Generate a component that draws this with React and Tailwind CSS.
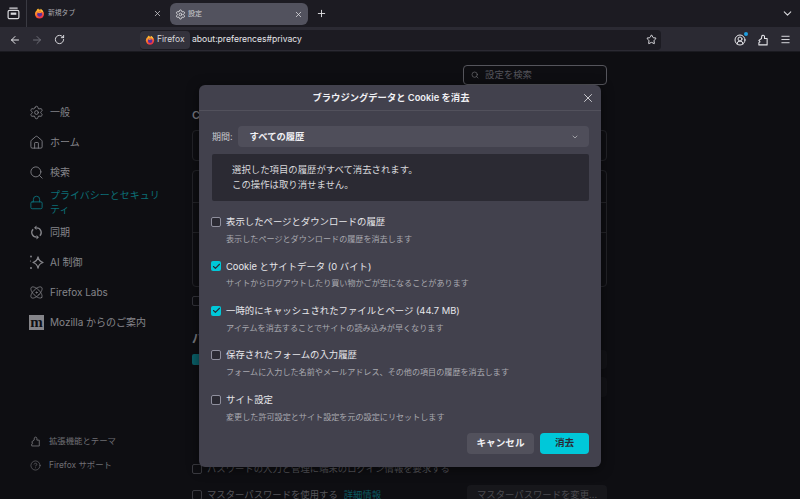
import React from "react";
import { X, Plus, ArrowLeft, ArrowRight, RotateCw, Star, Menu, ChevronDown, Settings, House, Search, Lock, Atom, CircleHelp, CircleUserRound, Check } from "lucide-react";

const FONT = "font-['Inter','Liberation_Sans','Noto_Sans_CJK_JP',sans-serif]";

function Fox({ size = 14 }) {
  return (
    <svg width={size} height={size} viewBox="0 0 16 16" className="shrink-0">
      <defs>
        <linearGradient id="foxg" x1="0.2" y1="0" x2="0.7" y2="1">
          <stop offset="0" stopColor="#ffc02e" />
          <stop offset="0.5" stopColor="#ff6a2b" />
          <stop offset="1" stopColor="#e3274f" />
        </linearGradient>
      </defs>
      <circle cx="8" cy="8.8" r="6.6" fill="url(#foxg)" />
      <path d="M4 3 C4.5 1.6 5.6 .8 6.6 .6 C6.3 1.8 7 2.6 8.4 3 L6 5 Z" fill="#ffb52e" />
      <path d="M9.2 1 C11.5 2 13 3.8 13.4 6 L10.5 5.2 Z" fill="#ffc93c" />
      <circle cx="8.2" cy="9" r="3.6" fill="#5b2a9d" />
      <path d="M5 6.5 C7 5 10 5.4 11.4 7.4 C10 7 8.6 7 7.6 7.8 Z" fill="#ff9a2b" />
    </svg>
  );
}

function Tray() {
  return (
    <svg width="13" height="13" viewBox="0 0 14 14" fill="none" stroke="#d8d8dc" strokeWidth="1.3">
      <rect x="1.2" y="3.6" width="11.6" height="9" rx="1.6" />
      <path d="M3 1.2 H11" strokeLinecap="round" />
      <rect x="4" y="6" width="6" height="2.4" fill="#d8d8dc" stroke="none" />
    </svg>
  );
}

function Ext({ size = 12, strokeWidth = 1.4 }) {
  return (
    <svg width={size} height={size} viewBox="0 0 16 16" fill="none" stroke="currentColor" strokeWidth={strokeWidth} strokeLinejoin="round">
      <path d="M2.5 14.5 H13.5 V6 H10 V3.2 A1.9 1.9 0 0 0 6.3 3 L6 6 L2.5 8.5 L4 10.5 L2.5 11.5 Z" />
    </svg>
  );
}

function Sync() {
  return (
    <svg width="15" height="15" viewBox="0 0 16 16" fill="none" stroke="currentColor" strokeWidth="1.4">
      <path d="M8 3 A5 5 0 0 1 11.6 11.5" />
      <path d="M8 13 A5 5 0 0 1 4.4 4.5" />
      <path d="M8 .6 V5.4 L5.4 3 Z" fill="currentColor" stroke="none" />
      <path d="M8 10.6 V15.4 L10.6 13 Z" fill="currentColor" stroke="none" />
    </svg>
  );
}

function Spark() {
  return (
    <svg width="15" height="15" viewBox="0 0 15 15" fill="none" stroke="currentColor" strokeWidth="1.3" strokeLinejoin="round">
      <path d="M9 2 C9.6 5 10.6 6.4 14 7.5 C10.6 8.6 9.6 10 9 13 C8.4 10 7.4 8.6 4 7.5 C7.4 6.4 8.4 5 9 2 Z" />
      <circle cx="2" cy="1.5" r="0.9" fill="currentColor" stroke="none" />
      <circle cx="2" cy="13" r="1" fill="currentColor" stroke="none" />
      <circle cx="1.5" cy="6" r="0.6" fill="currentColor" stroke="none" />
    </svg>
  );
}

function NavItem({ icon, children }) {
  return (
    <div className="flex h-[30px] items-center gap-[6px] text-[#85858a]">
      <span className="flex w-[15px] justify-center">{icon}</span>
      <span className="text-[10px]">{children}</span>
    </div>
  );
}

function Option({ checked, title, desc }) {
  return (
    <div className="flex flex-col">
      <div className="flex h-[16px] items-center gap-[5px]">
        {checked ? (
          <span className="flex h-[10px] w-[10px] items-center justify-center rounded-[2px] bg-[#00c8d9]">
            <Check size={9} strokeWidth={3} className="text-[#2b2a33]" />
          </span>
        ) : (
          <span className="h-[10px] w-[10px] rounded-[2px] border border-[#8f8f9d] bg-[#2b2a33]" />
        )}
        <span className="text-[9.4px] leading-none text-[#e6e6ea]">{title}</span>
      </div>
      <div className="mt-[1px] h-[16px] pl-[15px] text-[8.1px] leading-[16px] text-[#a9a9b0]">{desc}</div>
    </div>
  );
}

export default function App() {
  return (
    <div className={`${FONT} relative flex h-[499px] w-[800px] flex-col overflow-hidden bg-[#0e0e12]`}>
      {/* tab bar */}
      <div className="flex h-[27px] items-center bg-[#1c1b22]">
        <div className="flex h-[27px] w-[27px] items-center justify-center border-r border-[#3a3a42]">
          <Tray />
        </div>
        <div className="flex h-[22px] w-[135px] items-center pl-[7px] pr-[0px]">
          <Fox size={11} />
          <span className="ml-[3px] text-[6.8px] text-[#a9a9b0]">新規タブ</span>
          <X size={9} strokeWidth={2} className="ml-auto text-[#d0d0d4]" />
        </div>
        <div className="ml-[8px] mt-[1px] flex h-[22px] w-[138px] items-center rounded-[6px] bg-[#52525e] pl-[5px] pr-[5px]">
          <Settings size={11} className="text-[#d8d8dc]" />
          <span className="ml-[2px] text-[7px] text-[#d0d0d4]">設定</span>
          <X size={9} strokeWidth={2} className="ml-auto text-[#e0e0e4]" />
        </div>
        <Plus size={11} strokeWidth={2} className="ml-[8px] text-[#e0e0e4]" />
        <ChevronDown size={13} className="ml-auto mr-[6px] text-[#d8d8dc]" />
      </div>
      {/* toolbar */}
      <div className="flex h-[25px] items-center border-b border-[#1a1a20] bg-[#2b2a33] pt-[1px]">
        <ArrowLeft size={12} strokeWidth={2} className="ml-[9px] text-[#e6e6ea]" />
        <ArrowRight size={12} strokeWidth={2} className="ml-[10px] text-[#6f6f78]" />
        <RotateCw size={11} strokeWidth={2} className="ml-[11px] text-[#e6e6ea]" />
        <div className="ml-[75px] flex h-[20px] w-[521px] items-center rounded-[4px] bg-[#1c1b22]">
          <div className="flex h-[18px] w-[50px] items-center gap-[2px] rounded-[4px] bg-[#33323c] pl-[5px]">
            <Fox size={10} />
            <span className="text-[8.5px] text-[#d8d8dc]">Firefox</span>
          </div>
          <span className="ml-[2px] text-[8.6px] text-[#e6e6ea]">about:preferences#privacy</span>
          <Star size={11} strokeWidth={2} className="ml-auto mr-[4px] text-[#e6e6ea]" />
        </div>
        <div className="relative ml-[73px]">
          <CircleUserRound size={12} strokeWidth={2} className="text-[#e6e6ea]" />
          <span className="absolute right-[-2px] top-[-2px] h-[4px] w-[4px] rounded-full bg-[#1f9fe0]" />
        </div>
        <span className="ml-[11px] text-[#e6e6ea]"><Ext size={12} /></span>
        <Menu size={11} strokeWidth={2} className="ml-[11px] text-[#e6e6ea]" />
      </div>

      {/* page */}
      <div className="flex min-h-0 flex-1">
        <div className="flex w-[192px] flex-col pl-[29px] pt-[45px]">
          <NavItem icon={<Settings size={15} strokeWidth={1.4} />}>一般</NavItem>
          <NavItem icon={<House size={15} strokeWidth={1.4} />}>ホーム</NavItem>
          <NavItem icon={<Search size={15} strokeWidth={1.4} />}>検索</NavItem>
          <div className="flex h-[30px] items-center gap-[6px] text-[#0c6e77]">
            <span className="flex w-[15px] justify-center"><Lock size={15} strokeWidth={1.5} /></span>
            <span className="w-[112px] text-[10px] leading-[14px]">プライバシーとセキュリティ</span>
          </div>
          <NavItem icon={<Sync />}>同期</NavItem>
          <NavItem icon={<Spark />}>AI 制御</NavItem>
          <NavItem icon={<Atom size={15} strokeWidth={1.3} />}>Firefox Labs</NavItem>
          <NavItem icon={<span className="flex h-[15px] w-[15px] items-center justify-center bg-[#85858a] font-['Liberation_Serif',serif] text-[15px] font-bold leading-none text-[#0e0e12]">m</span>}>Mozilla からのご案内</NavItem>
          <div className="mt-auto flex flex-col gap-[6px] pb-[25px] text-[#6f6f74]">
            <div className="flex h-[18px] items-center gap-[8px] pl-[1px]">
              <Ext size={11} strokeWidth={1.3} />
              <span className="text-[8.4px]">拡張機能とテーマ</span>
            </div>
            <div className="flex h-[18px] items-center gap-[8px] pl-[1px]">
              <CircleHelp size={11} strokeWidth={1.4} />
              <span className="text-[8.4px]">Firefox サポート</span>
            </div>
          </div>
        </div>

        {/* content column behind the dialog */}
        <div className="flex w-[415px] flex-col *:shrink-0">
          <div className="mt-[13px] flex h-[20px] w-[144px] items-center self-end rounded-[4px] border border-[#55555c] pl-[7px]">
            <Search size={8} className="text-[#6f6f74]" />
            <span className="ml-[6px] text-[9.4px] text-[#55555c]">設定を検索</span>
          </div>
          <div className="mt-[23px] h-[14px] text-[11px] font-semibold leading-[14px] text-[#77777c]">C</div>
          <div className="mt-[8px] h-[31px] rounded-[4px] border border-[#232328]" />
          <div className="mt-[9px] flex h-[117px] flex-col divide-y divide-[#232328] rounded-[4px] border border-[#232328]">
            <div className="h-[32px]" />
            <div className="h-[30px]" />
            <div className="flex-1" />
          </div>
          <div className="mt-[9px] h-[10px] w-[10px] rounded-[2px] border border-[#33333a]" />
          <div className="mt-[25px] h-[16px] text-[12px] font-semibold leading-[16px] text-[#77777c]">パ</div>
          <div className="mt-[3px] flex h-[19px] items-center justify-between">
            <span className="h-[11px] w-[11px] rounded-[2px] bg-[#0a5f68]" />
            <span className="h-[19px] w-[80px] rounded-[4px] bg-[#131317]" />
          </div>
          <div className="mt-[8px] flex h-[20px] justify-end">
            <span className="h-[20px] w-[80px] rounded-[4px] bg-[#131317]" />
          </div>
          <div className="mt-[66px] flex h-[12px] items-center gap-[5px] text-[9.35px] text-[#55555a]">
            <span className="h-[10px] w-[10px] rounded-[2px] border border-[#3a3a40]" />
            パスワードの入力と管理に端末のログイン情報を要求する
          </div>
          <div className="mt-[10px] flex h-[20px] items-center text-[9.35px] text-[#55555a]">
            <span className="mr-[5px] h-[10px] w-[10px] rounded-[2px] border border-[#3a3a40]" />
            マスターパスワードを使用する
            <span className="ml-[6px] text-[#0a5a62]">詳細情報</span>
            <span className="ml-auto flex h-[20px] w-[140px] items-center rounded-[4px] bg-[#17171b] pl-[10px] text-[#4b4b50]">マスターパスワードを変更...</span>
          </div>
        </div>
      </div>

      {/* modal */}
      <div className="absolute left-[199px] top-[85px] flex h-[382px] w-[402px] flex-col rounded-[6px] bg-[#42414d] shadow-[0_2px_12px_rgba(0,0,0,0.5)]">
        <div className="relative flex h-[26px] items-center justify-center border-b border-[#52515c] pr-[18px] text-[9.3px] font-semibold text-[#f0f0f4]">
          ブラウジングデータと Cookie を消去
          <X size={14} strokeWidth={1.4} className="absolute right-[6px] top-[5.5px] text-[#e6e6ea]" />
        </div>
        <div className="flex items-center pl-[13px] pr-[12px] pt-[15px]">
          <span className="text-[9px] text-[#c8c8cc]">期間:</span>
          <div className="ml-[5px] flex h-[21px] flex-1 items-center rounded-[4px] bg-[#4f4e5a] pl-[12px] pr-[10px]">
            <span className="text-[9.3px] font-semibold text-[#f0f0f4]">すべての履歴</span>
            <ChevronDown size={8} className="ml-auto text-[#c8c8cc]" />
          </div>
        </div>
        <div className="ml-[13px] mr-[12px] mt-[7px] flex h-[47px] flex-col justify-center rounded-[2px] bg-[#2b2a33] pl-[20px] text-[9.4px] leading-[14.5px] text-[#d8d8dc]">
          <div>選択した項目の履歴がすべて消去されます。</div>
          <div>この操作は取り消せません。</div>
        </div>
        <div className="flex flex-col gap-[11.4px] px-[12px] pt-[13px]">
          <Option title="表示したページとダウンロードの履歴" desc="表示したページとダウンロードの履歴を消去します" />
          <Option checked title="Cookie とサイトデータ (0 バイト)" desc="サイトからログアウトしたり買い物かごが空になることがあります" />
          <Option checked title="一時的にキャッシュされたファイルとページ (44.7 MB)" desc="アイテムを消去することでサイトの読み込みが早くなります" />
          <Option title="保存されたフォームの入力履歴" desc="フォームに入力した名前やメールアドレス、その他の項目の履歴を消去します" />
          <Option title="サイト設定" desc="変更した許可設定とサイト設定を元の設定にリセットします" />
        </div>
        <div className="mt-auto flex justify-end gap-[6px] px-[12px] pb-[13px]">
          <div className="flex h-[21px] w-[67px] items-center justify-center rounded-[4px] bg-[#52515c] text-[9.6px] font-semibold text-[#f0f0f4]">キャンセル</div>
          <div className="flex h-[21px] w-[49px] items-center justify-center rounded-[4px] bg-[#00c8d9] text-[9.6px] font-semibold text-[#2b2a33]">消去</div>
        </div>
      </div>
    </div>
  );
}
